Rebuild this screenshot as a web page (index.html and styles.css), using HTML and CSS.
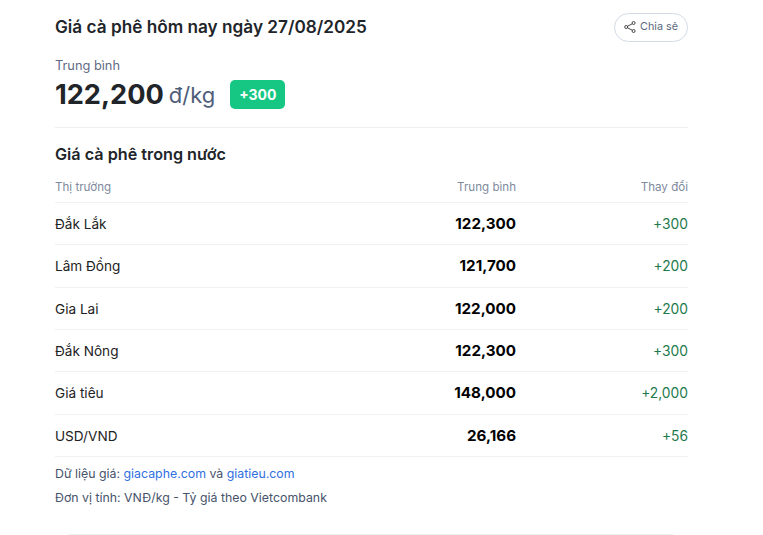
FILE: index.html
```html
<!DOCTYPE html>
<html lang="vi">
<head>
<meta charset="utf-8">
<title>Giá cà phê</title>
<link rel="stylesheet" href="styles.css">
</head>
<body>
<main class="card">
  <header class="head">
    <h1 class="title">Giá cà phê hôm nay ngày 27/08/2025</h1>
    <button class="share">
      <svg class="share-icon" width="12" height="12" viewBox="0 0 12 12" fill="none" stroke="#333" stroke-width="0.9">
        <circle cx="2.2" cy="6" r="1.5"/><circle cx="9.6" cy="2" r="1.5"/><circle cx="9.6" cy="10" r="1.5"/>
        <path d="M3.6 5.2 8.2 2.8M3.6 6.8 8.2 9.2"/>
      </svg>
      <span>Chia sẻ</span>
    </button>
  </header>
  <section class="summary">
    <div class="label">Trung bình</div>
    <div class="price-row">
      <span class="price">122,200</span>
      <span class="unit">đ/kg</span>
      <span class="badge">+300</span>
    </div>
  </section>
  <h2 class="subtitle">Giá cà phê trong nước</h2>
  <table class="table">
    <thead>
      <tr><th class="c1">Thị trường</th><th class="c2">Trung bình</th><th class="c3">Thay đổi</th></tr>
    </thead>
    <tbody>
      <tr><td>Đắk Lắk</td><td class="num">122,300</td><td class="chg">+300</td></tr>
      <tr><td>Lâm Đồng</td><td class="num">121,700</td><td class="chg">+200</td></tr>
      <tr><td>Gia Lai</td><td class="num">122,000</td><td class="chg">+200</td></tr>
      <tr><td>Đắk Nông</td><td class="num">122,300</td><td class="chg">+300</td></tr>
      <tr><td>Giá tiêu</td><td class="num">148,000</td><td class="chg">+2,000</td></tr>
      <tr><td>USD/VND</td><td class="num">26,166</td><td class="chg">+56</td></tr>
    </tbody>
  </table>
  <p class="note">Dữ liệu giá: <a href="#">giacaphe.com</a> và <a href="#">giatieu.com</a></p>
  <p class="note">Đơn vị tính: VNĐ/kg - Tỷ giá theo Vietcombank</p>
</main>
<hr class="foot-line">
</body>
</html>
```

FILE: styles.css
```css
* { box-sizing: border-box; }
html, body { height: 535px; overflow: hidden; }
body {
  margin: 0;
  padding: 0 75px 0 55px;
  background: #fff;
  font-family: Inter, "Noto Sans", sans-serif;
  color: #1f2328;
}
.card { height: 534px; padding-top: 12px; }
.head { display: flex; justify-content: space-between; align-items: center; height: 29px; margin-bottom: 1px; }
.title { margin: 0; font-size: 17.2px; font-weight: 600; line-height: 28px; color: #212529; }
.share {
  display: flex; align-items: center; gap: 4px;
  height: 29px; width: 74px; padding: 0 0 2px 9px; position: relative; top: 1px;
  border: 1px solid #d3dae6; border-radius: 15px;
  background: #fff; font: 400 10.8px Inter, sans-serif; color: #5b6880;
}
.summary { margin-top: 16px; height: 71px; border-bottom: 1px solid #eeeff1; }
.label { font-size: 12.8px; line-height: 17px; color: #5f6b85; }
.price-row { display: flex; align-items: center; height: 29px; margin-top: 6px; }
.price { font-size: 27.2px; font-weight: 700; color: #212529; }
.unit { font-size: 22px; margin-left: 5px; color: #4f5d7a; }
.badge {
  margin-left: 15px; width: 55px; height: 29px; border-radius: 5px;
  background: #16c784; color: #fff; font-size: 14px; font-weight: 700;
  display: flex; align-items: center; justify-content: center;
}
.subtitle { margin: 15px 0 0; font-size: 16.2px; font-weight: 600; line-height: 22px; color: #212529; }
.table { width: 100%; border-collapse: collapse; margin-top: 8.4px; table-layout: fixed; }
th { font-size: 11.6px; font-weight: 400; color: #808a9d; height: 29px; padding: 0 0 1px; text-align: right; border-bottom: 1px solid #eff2f5; }
th.c1 { text-align: left; width: 287px; }
th.c3 { width: 172px; }
td { height: 42.4px; padding: 0.5px 0 0; font-size: 13.8px; text-align: right; border-bottom: 1px solid #eff2f5; color: #222; }
td:first-child { text-align: left; font-size: 13.6px; }
td.num { padding: 0 0 0.5px; font-size: 15.2px; font-weight: 700; color: #000; }
.chg { color: #1e7a4c; }
.note { margin: 0; font-size: 12.35px; line-height: 24px; color: #47536a; }
.table + .note { margin-top: 4.6px; }
.note a { color: #2f6fe0; text-decoration: none; }
.foot-line { position: absolute; left: 68px; top: 534px; width: 605px; margin: 0; border: 0; border-top: 1px solid #eeeff1; }
```
